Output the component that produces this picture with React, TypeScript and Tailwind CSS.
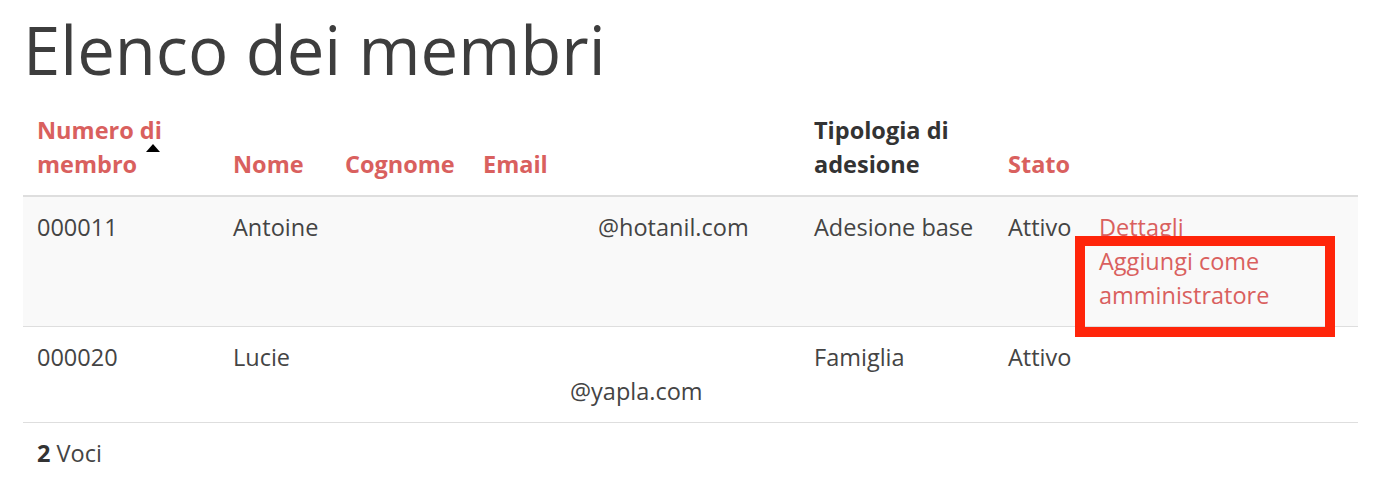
const rows = [
  {
    num: "000011",
    nome: "Antoine",
    cognome: "",
    email: <div className="pl-[115px]">@hotanil.com</div>,
    tipo: "Adesione base",
    stato: "Attivo",
    admin: true,
  },
  {
    num: "000020",
    nome: "Lucie",
    cognome: "",
    email: (
      <div className="pl-[87px]">
        <br />
        @yapla.com
      </div>
    ),
    tipo: "Famiglia",
    stato: "Attivo",
    admin: false,
  },
];

const cell = "px-[14px] pt-[13px] pb-[14px]";

export default function App() {
  return (
    <div className="min-h-[495px] bg-white px-[23px] pt-[9px] text-[#444] font-['Open_Sans',sans-serif]">
      <h1 className="mb-[10px] text-[67px] leading-[80px] font-normal text-[#3d3d3d]">Elenco dei membri</h1>

      <table className="w-[1335px] table-fixed border-collapse text-[23.5px] leading-[34px]">
        <colgroup>
          <col className="w-[196px]" />
          <col className="w-[112px]" />
          <col className="w-[138px]" />
          <col className="w-[331px]" />
          <col className="w-[194px]" />
          <col className="w-[91px]" />
          <col />
        </colgroup>
        <thead>
          <tr className="border-b-2 border-[#dedede] text-left align-bottom">
            <th className="relative px-[14px] py-[14px] font-bold text-[#d9605e]">
              Numero di
              <br />
              membro
              <span className="absolute left-[123px] top-[45px] h-0 w-0 border-x-[7px] border-b-[8px] border-x-transparent border-b-black" />
            </th>
            <th className="px-[14px] py-[14px] font-bold text-[#d9605e]">Nome</th>
            <th className="px-[14px] py-[14px] font-bold text-[#d9605e]">Cognome</th>
            <th className="px-[14px] py-[14px] font-bold text-[#d9605e]">Email</th>
            <th className="px-[14px] py-[14px] font-bold text-[#333]">
              Tipologia di
              <br />
              adesione
            </th>
            <th className="px-[14px] py-[14px] font-bold text-[#d9605e]">Stato</th>
            <th className="px-[14px] py-[14px]" />
          </tr>
        </thead>
        <tbody>
          {rows.map((r, i) => (
            <tr key={r.num} className={`border-b border-[#dedede] align-top ${i === 0 ? "bg-[#f9f9f9]" : "bg-white"}`}>
              <td className={cell}>{r.num}</td>
              <td className={cell}>{r.nome}</td>
              <td className={cell}>{r.cognome}</td>
              <td className={`${cell} whitespace-nowrap`}>{r.email}</td>
              <td className={`${cell} whitespace-nowrap`}>{r.tipo}</td>
              <td className={cell}>{r.stato}</td>
              <td className={`${cell} relative text-[#d9605e]`}>
                {r.admin && (
                  <>
                    <div>Dettagli</div>
                    <div>
                      Aggiungi come
                      <br />
                      amministratore
                    </div>
                    {/* highlight box */}
                    <div className="absolute left-[-10px] top-[39px] h-[101px] w-[260px] border-[10px] border-[#ff250a]" />
                  </>
                )}
              </td>
            </tr>
          ))}
        </tbody>
      </table>

      <div className="px-[14px] py-[13px] text-[23.5px] leading-[34px]">
        <span className="font-bold text-[#333]">2</span> Voci
      </div>
    </div>
  );
}
